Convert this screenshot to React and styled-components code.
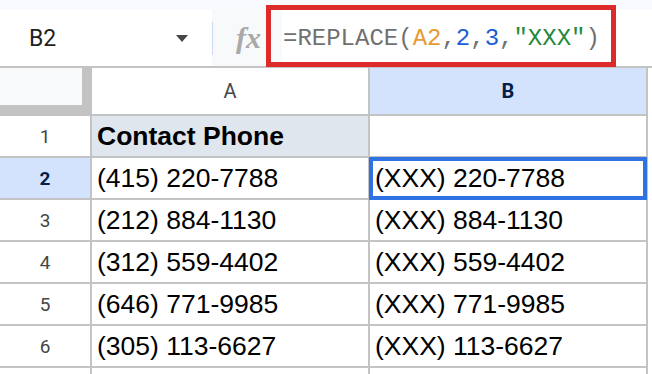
import React from 'react'
import styled, { createGlobalStyle } from "styled-components";

const GlobalStyle = createGlobalStyle`
  html, body {
    margin: 0;
    padding: 0;
    background: #ffffff;
    overflow: hidden;
  }
`;

const Page = styled.div`
  width: 652px;
  height: 374px;
  overflow: hidden;
  background: #ffffff;
  font-family: Roboto, "Liberation Sans", Arial, sans-serif;
`;

const Toolbar = styled.div`
  display: flex;
  height: 56px;
  padding-top: 10px;
  background: #f8fafd;
  border-bottom: 2px solid #c4c4c4;
`;

const NameBox = styled.div`
  width: 212px;
  display: flex;
  align-items: center;
  justify-content: space-between;
  padding: 0 24px 0 29px;
  box-sizing: border-box;
  background: #ffffff;
`;

const NameText = styled.span`
  font-size: 23px;
  color: #1f1f1f;
`;

const Divider = styled.div`
  width: 1px;
  margin: 12px 0 11px;
  background: #c9d9ee;
`;

const FxBox = styled.div`
  width: 69px;
  display: flex;
  align-items: center;
  padding-left: 23px;
  box-sizing: border-box;
  background: #f8f9fa;
`;

const FxGlyph = styled.span`
  font-family: "Liberation Serif", "DejaVu Serif", serif;
  font-style: italic;
  font-weight: bold;
  font-size: 30px;
  color: #a9a9a9;
  line-height: 1;
`;

const FormulaBar = styled.div`
  flex: 1;
  position: relative;
  display: flex;
  align-items: center;
  padding-left: 1px;
  background: #ffffff;
`;

const Highlight = styled.div`
  position: absolute;
  top: -5px;
  bottom: -1px;
  left: -16px;
  right: 36px;
  border: 5px solid #dd2a2a;
  pointer-events: none;
`;

const Formula = styled.span`
  font-family: "Liberation Mono", "DejaVu Sans Mono", monospace;
  font-size: 24px;
  white-space: pre;
`;

const Token = styled.span`
  color: ${p => p.$color};
`;

const Sheet = styled.div`
  display: grid;
  grid-template-columns: 90px 276px 276px;
  grid-template-rows: 46px repeat(7, 40px);
  gap: 2px;
  width: 648px;
  padding: 0 2px 2px 0;
  box-sizing: border-box;
  background: #c3c3c3;
`;

const Corner = styled.div`
  background: #f8f9fa;
  border-right: 8px solid #c3c3c3;
  border-bottom: 9px solid #c3c3c3;
`;

const ColHeader = styled.div`
  display: flex;
  align-items: center;
  justify-content: center;
  font-size: 20px;
  font-weight: ${p => (p.$active ? 700 : 400)};
  color: ${p => (p.$active ? "#041e49" : "#444746")};
  background: ${p => (p.$active ? "#d3e3fd" : "#ffffff")};
`;

const RowHeader = styled(ColHeader)`
  font-size: 19px;
`;

const Cell = styled.div`
  position: relative;
  display: flex;
  align-items: center;
  padding: 0 5px;
  font-family: "Liberation Sans", Arial, sans-serif;
  font-size: 26.5px;
  font-weight: ${p => (p.$bold ? 700 : 400)};
  color: #000000;
  background: ${p => (p.$tint ? "#dfe6ee" : "#ffffff")};
  white-space: nowrap;
`;

const Selection = styled.div`
  position: absolute;
  top: -1px;
  left: -1px;
  right: -1px;
  bottom: -2px;
  border: 4px solid #2f72e4;
  pointer-events: none;
`;

const tokens = [
  ["=REPLACE(", "#707070"],
  ["A2", "#e69a36"],
  [",", "#707070"],
  ["2", "#1a5dd6"],
  [",", "#707070"],
  ["3", "#1a5dd6"],
  [",", "#707070"],
  ['"XXX"', "#1f8a3c"],
  [")", "#707070"],
];

const rows = [
  ["Contact Phone", ""],
  ["(415) 220-7788", "(XXX) 220-7788"],
  ["(212) 884-1130", "(XXX) 884-1130"],
  ["(312) 559-4402", "(XXX) 559-4402"],
  ["(646) 771-9985", "(XXX) 771-9985"],
  ["(305) 113-6627", "(XXX) 113-6627"],
];

export default function App() {
  return (
    <Page>
      <GlobalStyle />
      <Toolbar>
        <NameBox>
          <NameText>B2</NameText>
          <svg width="12" height="7" viewBox="0 0 12 7">
            <polygon points="0,0 12,0 6,7" fill="#444746" />
          </svg>
        </NameBox>
        <Divider />
        <FxBox>
          <FxGlyph>fx</FxGlyph>
        </FxBox>
        <FormulaBar>
          <Highlight />
          <Formula>
            {tokens.map(([t, c], i) => (
              <Token key={i} $color={c}>{t}</Token>
            ))}
          </Formula>
        </FormulaBar>
      </Toolbar>

      <Sheet>
        <Corner />
        <ColHeader>A</ColHeader>
        <ColHeader $active>B</ColHeader>
        {rows.map((r, i) => (
          <React.Fragment key={i}>
            <RowHeader $active={i === 1}>{i + 1}</RowHeader>
            <Cell $tint={i === 0} $bold={i === 0}>{r[0]}</Cell>
            <Cell>
              {r[1]}
              {i === 1 && <Selection />}
            </Cell>
          </React.Fragment>
        ))}
        {/* partial next row, cut off by the window */}
        <RowHeader />
        <Cell />
        <Cell />
      </Sheet>
    </Page>
  )
}
